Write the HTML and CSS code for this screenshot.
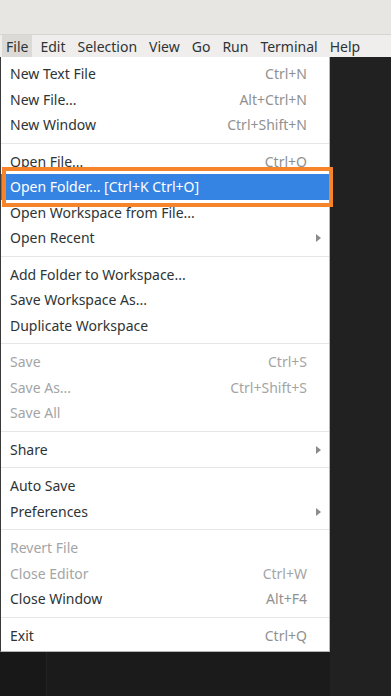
FILE: index.html
```html
<!DOCTYPE html>
<html lang="en">
<head>
    <meta charset="UTF-8">
    <meta name="viewport" content="width=device-width, initial-scale=1.0">
    <title>File menu</title>
    <link rel="stylesheet" href="styles.css">
</head>
<body>
    <div class="titlebar"></div>
    <div class="menubar">
        <span class="menubar-item active">File</span>
        <span class="menubar-item">Edit</span>
        <span class="menubar-item">Selection</span>
        <span class="menubar-item">View</span>
        <span class="menubar-item">Go</span>
        <span class="menubar-item">Run</span>
        <span class="menubar-item">Terminal</span>
        <span class="menubar-item">Help</span>
    </div>

    <div class="workbench">
        <div class="activity"></div>
        <div class="editor"></div>
        <div class="side"></div>
    </div>

    <div class="menu">
        <div class="item"><span>New Text File</span><span class="key">Ctrl+N</span></div>
        <div class="item"><span>New File...</span><span class="key">Alt+Ctrl+N</span></div>
        <div class="item"><span>New Window</span><span class="key">Ctrl+Shift+N</span></div>
        <div class="sep"></div>
        <div class="item"><span>Open File...</span><span class="key">Ctrl+O</span></div>
        <div class="item selected"><span>Open Folder... [Ctrl+K Ctrl+O]</span></div>
        <div class="item"><span>Open Workspace from File...</span></div>
        <div class="item"><span>Open Recent</span><span class="arrow"></span></div>
        <div class="sep"></div>
        <div class="item"><span>Add Folder to Workspace...</span></div>
        <div class="item"><span>Save Workspace As...</span></div>
        <div class="item"><span>Duplicate Workspace</span></div>
        <div class="sep"></div>
        <div class="item disabled"><span>Save</span><span class="key">Ctrl+S</span></div>
        <div class="item disabled"><span>Save As...</span><span class="key">Ctrl+Shift+S</span></div>
        <div class="item disabled"><span>Save All</span></div>
        <div class="sep"></div>
        <div class="item"><span>Share</span><span class="arrow"></span></div>
        <div class="sep"></div>
        <div class="item"><span>Auto Save</span></div>
        <div class="item"><span>Preferences</span><span class="arrow"></span></div>
        <div class="sep"></div>
        <div class="item disabled"><span>Revert File</span></div>
        <div class="item disabled"><span>Close Editor</span><span class="key">Ctrl+W</span></div>
        <div class="item"><span>Close Window</span><span class="key">Alt+F4</span></div>
        <div class="sep"></div>
        <div class="item"><span>Exit</span><span class="key">Ctrl+Q</span></div>
    </div>

    <div class="focus-box"></div>
</body>
</html>
```

FILE: styles.css
```css
body {
    margin: 0;
    height: 696px;
    overflow: hidden;
    display: flex;
    flex-direction: column;
    background-color: #1b1b1b;
    font-family: "Noto Sans", "Open Sans", sans-serif;
    font-size: 14px;
}
.titlebar {
    height: 34px;
    background-color: #e8e6e3;
    border-bottom: 1px solid #d8d5d1;
}
.menubar {
    height: 22px;
    display: flex;
    align-items: stretch;
    gap: 4px;
    padding-left: 2px;
    background-color: #f0eeec;
    color: #2e3436;
}
.menubar-item {
    display: flex;
    align-items: center;
    padding: 0 4px;
}
.menubar-item.active {
    background-color: #dcdad7;
}
.workbench {
    flex: 1;
    display: flex;
}
.activity {
    width: 46px;
    background-color: #181818;
    border-right: 1px solid #232323;
}
.editor {
    flex: 1;
    background-color: #1b1b1b;
}
.side {
    width: 61px;
    background-color: #212121;
}
.menu {
    position: absolute;
    top: 57px;
    left: 0;
    width: 328px;
    padding: 4px 0 3px;
    background: white;
    border-left: 1px solid #3a3a3a;
    border-right: 1px solid #b5b5b5;
    border-bottom: 1px solid #b5b5b5;
}
.item {
    height: 25.5px;
    display: flex;
    align-items: center;
    justify-content: space-between;
    padding: 0 22px 0 9px;
    color: #2e3436;
    position: relative;
}
.item .key {
    color: #8f9191;
}
.item.disabled {
    color: #a3a5a5;
}
.item.disabled .key {
    color: #a3a5a5;
}
.item.selected {
    background-color: #3584e4;
    color: white;
}
.arrow {
    position: absolute;
    right: 8px;
    top: 9px;
    width: 0;
    height: 0;
    border-top: 4px solid transparent;
    border-bottom: 4px solid transparent;
    border-left: 5px solid #8a8c8c;
}
.sep {
    height: 1px;
    margin: 5px 0;
    background-color: #e6e6e6;
}
.focus-box {
    position: absolute;
    left: 2px;
    top: 167px;
    width: 323px;
    height: 32px;
    border: 4px solid #f5842a;
}
```
